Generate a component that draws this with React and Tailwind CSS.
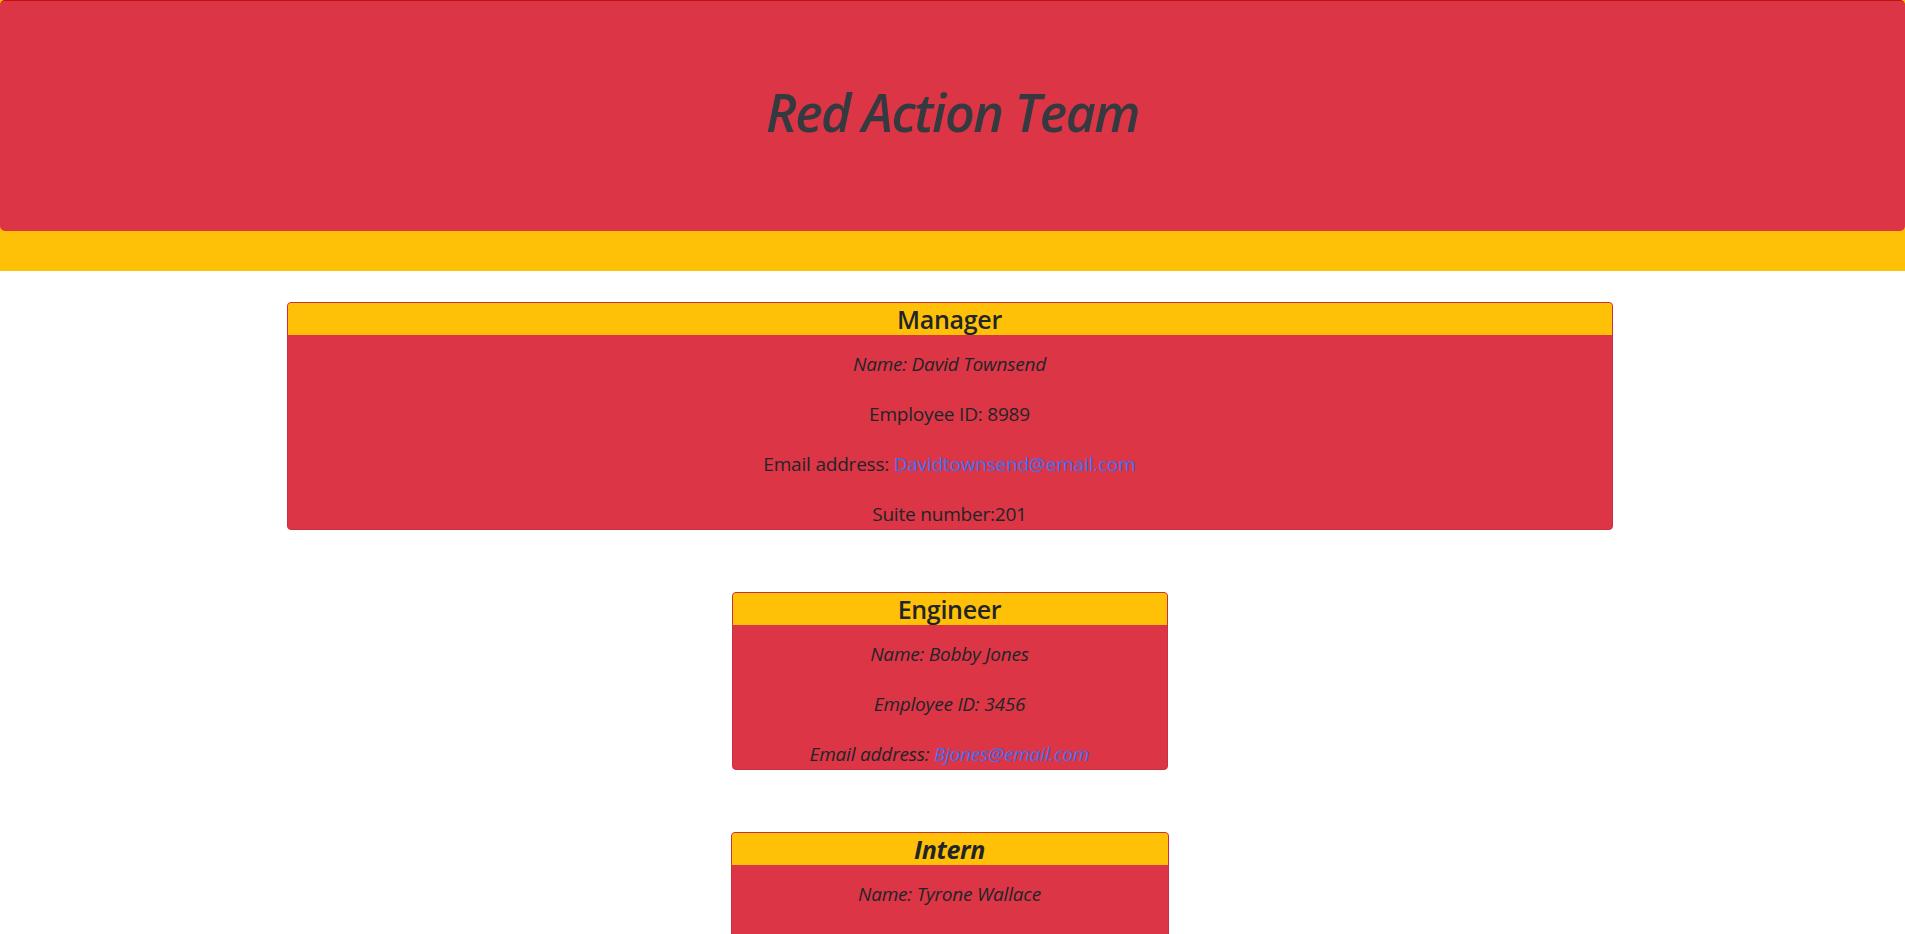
import React from 'react';

const team = [
  {
    role: 'Manager',
    width: 'w-[1326px]',
    roleClass: 'font-semibold',
    lines: [
      { label: 'Name: David Townsend', italic: true },
      { label: 'Employee ID: 8989' },
      { label: 'Email address: ', email: 'Davidtownsend@email.com' },
      { label: 'Suite number:201' },
    ],
  },
  {
    role: 'Engineer',
    width: 'w-[436px]',
    roleClass: 'font-semibold',
    lines: [
      { label: 'Name: Bobby Jones', italic: true },
      { label: 'Employee ID: 3456', italic: true },
      { label: 'Email address: ', email: 'Bjones@email.com', italic: true },
    ],
  },
  {
    role: 'Intern',
    width: 'w-[438px]',
    roleClass: 'font-bold italic',
    lines: [
      { label: 'Name: Tyrone Wallace', italic: true },
      { label: 'Employee ID: 7812', italic: true },
      { label: 'Email address: ', email: 'Twallace@email.com', italic: true },
      { label: 'School: UCLA', italic: true },
    ],
  },
];

const EmployeeCard = ({ employee }) => (
  <div className={`${employee.width} bg-[#dc3545] border border-[#c8303f] rounded-[4px] overflow-hidden text-center`}>
    <h2 className={`bg-[#ffc107] text-[25px] leading-[31px] tracking-[-0.3px] text-[#212529] pt-px ${employee.roleClass}`}>
      {employee.role}
    </h2>
    <div className="pt-[14px] flex flex-col gap-5 text-[19px] leading-[30px] tracking-[-0.2px] text-[#212529]">
      {employee.lines.map((line) => (
        <p key={line.label + (line.email || '')} className={line.italic ? 'italic' : ''}>
          {line.label}
          {line.email && <a href="#" className="text-[#3a6ff2]">{line.email}</a>}
        </p>
      ))}
    </div>
  </div>
);

export default function App() {
  return (
    <div className="min-h-screen bg-white font-['Open_Sans',sans-serif]">
      <header className="bg-[#ffc107] pb-10">
        <div className="h-[231px] bg-[#dc3545] rounded-[5px] border-t border-[#c40f12] flex items-center justify-center pb-2">
          <h1 className="italic font-semibold text-[52px] text-[#343a40] tracking-[-1.5px]">Red Action Team</h1>
        </div>
      </header>

      <main className="flex flex-col items-center gap-[62px] pt-[31px] pb-16 pr-[6px]">
        {team.map((employee) => (
          <EmployeeCard key={employee.role} employee={employee} />
        ))}
      </main>
    </div>
  );
}
